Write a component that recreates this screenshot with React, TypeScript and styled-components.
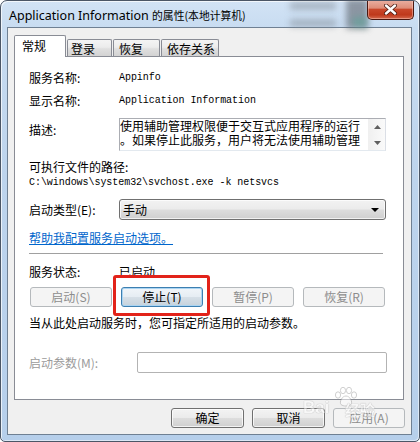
import React from "react";
import styled, { createGlobalStyle } from "styled-components";

const CJK = `"Noto Sans CJK SC", sans-serif`;
const MONO = `"Liberation Mono", "Noto Sans CJK SC", monospace`;

const Global = createGlobalStyle`
  html, body { margin: 0; padding: 0; background: #ffffff; }
  body { width: 420px; height: 442px; overflow: hidden; }
  #root { width: 420px; height: 442px; }
  * { box-sizing: border-box; }
`;

const Window = styled.div`
  position: relative;
  width: 420px;
  height: 442px;
  border: 1px solid #4b5666;
  border-radius: 7px 7px 5px 5px;
  background: linear-gradient(180deg, #d2e3f5 0%, #c8dcf1 6%, #bdd4ed 40%, #b6cfeb 100%);
  box-shadow: inset 1px 1px 0 rgba(255, 255, 255, 0.7), inset -1px -1px 0 rgba(255, 255, 255, 0.5);
  display: flex;
  flex-direction: column;
  padding: 0 7px 6px 6px;
  overflow: hidden;
  font-family: ${CJK};
`;

const TitleBar = styled.div`
  position: relative;
  height: 26px;
  flex: none;
  display: flex;
  align-items: center;
  padding-left: 2px;
`;

const Glass = styled.div<{ $l: number; $t: number; $w: number; $h: number; $c: string }>`
  position: absolute;
  left: ${(p) => p.$l}px;
  top: ${(p) => p.$t}px;
  width: ${(p) => p.$w}px;
  height: ${(p) => p.$h}px;
  background: ${(p) => p.$c};
  filter: blur(3px);
  pointer-events: none;
`;

const TitleText = styled.div`
  position: relative;
  font-family: "Noto Sans", ${CJK};
  font-size: 12.5px;
  line-height: 16px;
  color: #000;
  white-space: nowrap;
  margin-top: 2px;
`;

const TitleCjk = styled.span`
  font-family: ${CJK};
  font-size: 10.8px;
`;

const CloseButton = styled.div`
  position: relative;
  margin-left: auto;
  margin-right: -2px;
  align-self: flex-start;
  margin-top: -1px;
  width: 47px;
  height: 20px;
  border: 1px solid #4a1810;
  border-top: none;
  border-radius: 0 0 5px 5px;
  background: linear-gradient(180deg, #eab1a3 0%, #de8d78 42%, #c9472a 50%, #bf391c 78%, #d56a4e 100%);
  box-shadow: inset 0 0 0 1px rgba(255, 210, 200, 0.45);
  display: flex;
  align-items: center;
  justify-content: center;
`;

const Client = styled.div`
  flex: 1;
  display: flex;
  flex-direction: column;
  background: #f0f0f0;
  border: 1px solid #6f8093;
  padding: 7px 7px 6px 6px;
`;

const TabStrip = styled.div`
  display: flex;
  align-items: flex-end;
  height: 21px;
  flex: none;
`;

const Tab = styled.div<{ $active?: boolean; $w: number; $pl: number; $ml?: number }>`
  flex: none;
  position: relative;
  z-index: ${(p) => (p.$active ? 2 : 1)};
  width: ${(p) => p.$w}px;
  height: ${(p) => (p.$active ? 22 : 17)}px;
  margin-bottom: ${(p) => (p.$active ? -1 : 0)}px;
  margin-left: ${(p) => p.$ml ?? 0}px;
  padding: ${(p) => (p.$active ? 2 : 1)}px 0 0 ${(p) => p.$pl}px;
  border: 1px solid #898c95;
  border-bottom: none;
  border-radius: 2px 2px 0 0;
  background: ${(p) =>
    p.$active
      ? "#ffffff"
      : "linear-gradient(180deg, #f4f4f4 0%, #ececec 45%, #dfdfdf 55%, #d3d3d3 100%)"};
  font-size: 12px;
  line-height: 16px;
  color: #000;
  white-space: nowrap;
`;

const Panel = styled.div`
  flex: 1;
  background: #ffffff;
  border: 1px solid #898c95;
  display: flex;
  flex-direction: column;
  padding: 0 0 0 14px;
  font-size: 12px;
  color: #000;
`;

const Row = styled.div<{ $mt: number; $h?: number; $top?: boolean }>`
  display: flex;
  align-items: ${(p) => (p.$top ? "flex-start" : "center")};
  margin-top: ${(p) => p.$mt}px;
  height: ${(p) => p.$h ?? 16}px;
  line-height: 16px;
  white-space: nowrap;
`;

const Label = styled.div<{ $w?: number; $dim?: boolean; $mt?: number }>`
  flex: none;
  width: ${(p) => p.$w ?? 90}px;
  margin-top: ${(p) => p.$mt ?? 0}px;
  color: ${(p) => (p.$dim ? "#9b9b9b" : "#000")};
  font-size: 12px;
  line-height: 16px;
`;

const Mono = styled.span`
  font-family: ${MONO};
  font-size: 10px;
  letter-spacing: -0.05px;
`;

const DescBox = styled.div`
  flex: none;
  width: 267px;
  height: 33px;
  border: 1px solid #abadb3;
  border-right-color: #dbdfe6;
  border-bottom-color: #e3e9ef;
  background: #fff;
  display: flex;
  overflow: hidden;
`;

const DescText = styled.div`
  flex: 1;
  padding-left: 0;
  font-size: 12px;
  line-height: 13.5px;
  white-space: normal;
  overflow: hidden;
`;

const ScrollBar = styled.div`
  flex: none;
  width: 17px;
  background: linear-gradient(90deg, #f0f0f0, #fafafa);
  border-left: 1px solid #f0f0f0;
  display: flex;
  flex-direction: column;
  align-items: center;
  justify-content: space-between;
  padding: 6px 0 5px;
`;

const Combo = styled.div`
  flex: none;
  width: 267px;
  height: 21px;
  border: 1px solid #707070;
  border-radius: 3px;
  background: linear-gradient(180deg, #f2f2f2 0%, #ebebeb 48%, #dddddd 52%, #cfcfcf 100%);
  box-shadow: inset 0 0 0 1px rgba(255, 255, 255, 0.7);
  display: flex;
  align-items: center;
  padding: 0 3px 0 3px;
  font-size: 12px;
`;

const ComboArrow = styled.svg`
  margin-left: auto;
  margin-right: 3px;
`;

const Link = styled.a`
  color: #0066cc;
  text-decoration: underline;
  font-size: 12px;
  cursor: pointer;
`;

const Separator = styled.div`
  margin-top: 7px;
  width: 354px;
  height: 1px;
  background: #a0a0a0;
  flex: none;
`;

const ButtonRow = styled.div<{ $mt: number }>`
  display: flex;
  gap: 9px;
  margin-top: ${(p) => p.$mt}px;
  padding-left: 1px;
`;

type Variant = "normal" | "disabled" | "focused";

const Button = styled.div<{ $v?: Variant; $w: number }>`
  flex: none;
  width: ${(p) => p.$w}px;
  height: 20px;
  border-radius: 3px;
  border: 1px solid
    ${(p) => (p.$v === "disabled" ? "#b5b9bc" : p.$v === "focused" ? "#3c7fb1" : "#707070")};
  background: ${(p) =>
    p.$v === "disabled"
      ? "#f4f4f4"
      : p.$v === "focused"
      ? "linear-gradient(180deg, #f1f5f9 0%, #e6edf3 48%, #d6dfe7 52%, #c6d2dc 100%)"
      : "linear-gradient(180deg, #f3f3f3 0%, #ebebeb 48%, #dddddd 52%, #cfcfcf 100%)"};
  box-shadow: ${(p) =>
    p.$v === "disabled"
      ? "none"
      : p.$v === "focused"
      ? "inset 0 0 0 1px #aad4f2"
      : "inset 0 0 0 1px rgba(255,255,255,0.75)"};
  color: ${(p) => (p.$v === "disabled" ? "#8d8d8d" : "#000")};
  font-size: 12px;
  line-height: 16px;
  display: flex;
  align-items: center;
  justify-content: center;
  white-space: nowrap;
`;

const TextInput = styled.div`
  flex: none;
  width: 250px;
  height: 21px;
  border: 1px solid #b3b3b3;
  border-radius: 2px;
  background: #fff;
`;

const DialogButtons = styled.div`
  flex: none;
  display: flex;
  justify-content: flex-end;
  gap: 8px;
  margin-top: 8px;
  margin-right: -1px;
`;

const Highlight = styled.div`
  position: absolute;
  left: 112px;
  top: 274px;
  width: 97px;
  height: 41px;
  border: 3px solid #e2231a;
  border-radius: 3px;
  pointer-events: none;
`;

const Watermark = styled.div`
  position: absolute;
  left: 300px;
  top: 384px;
  width: 100px;
  height: 50px;
  opacity: 0.5;
  pointer-events: none;
  color: #ffffff;
  text-shadow: 0 0 1px #8a8a8a, 0 0 1px #8a8a8a;
`;

const WmBai = styled.div`
  position: absolute;
  left: 2px;
  top: 14px;
  font-family: "Liberation Sans", sans-serif;
  font-weight: bold;
  font-size: 17px;
  line-height: 18px;
`;

const WmJing = styled.div`
  position: absolute;
  left: 44px;
  top: 16px;
  font-family: ${CJK};
  font-weight: bold;
  font-size: 15px;
  line-height: 18px;
`;

const WmPaw = styled.svg`
  position: absolute;
  left: 32px;
  top: 2px;
`;

export default function App() {
  return (
    <>
      <Global />
      <Window>
        <TitleBar>
          <Glass $l={283} $t={1} $w={46} $h={8} $c="rgba(120,128,138,0.45)" />
          <Glass $l={283} $t={18} $w={46} $h={8} $c="rgba(120,128,138,0.45)" />
          <Glass $l={339} $t={-2} $w={22} $h={30} $c="rgba(95,100,108,0.6)" />
          <Glass $l={346} $t={16} $w={14} $h={10} $c="rgba(80,170,150,0.45)" />
          <TitleText>
            Application Information <TitleCjk>的属性(本地计算机)</TitleCjk>
          </TitleText>
          <CloseButton aria-label="关闭">
            <svg width="13" height="11" viewBox="0 0 13 11">
              <path d="M2 1.5 L11 9.5 M11 1.5 L2 9.5" stroke="#4a1a10" strokeWidth="4" strokeLinecap="round" />
              <path d="M2 1.5 L11 9.5 M11 1.5 L2 9.5" stroke="#ffffff" strokeWidth="2.4" strokeLinecap="round" />
            </svg>
          </CloseButton>
        </TitleBar>
        <Client>
          <TabStrip>
            <Tab $active $w={52} $pl={7}>常规</Tab>
            <Tab $w={45} $pl={3} $ml={1}>登录</Tab>
            <Tab $w={47} $pl={5} $ml={1}>恢复</Tab>
            <Tab $w={58} $pl={5} $ml={1}>依存关系</Tab>
          </TabStrip>
          <Panel>
            <Row $mt={13}>
              <Label>服务名称:</Label>
              <Mono>Appinfo</Mono>
            </Row>
            <Row $mt={7}>
              <Label>显示名称:</Label>
              <Mono>Application Information</Mono>
            </Row>
            <Row $mt={9} $h={33} $top>
              <Label $mt={4}>描述:</Label>
              <DescBox>
                <DescText>
                  使用辅助管理权限便于交互式应用程序的运行
                  <br />
                  。如果停止此服务，用户将无法使用辅助管理
                </DescText>
                <ScrollBar>
                  <svg width="7" height="4" viewBox="0 0 7 4">
                    <path d="M0 4 L3.5 0 L7 4 Z" fill="#5f5f5f" />
                  </svg>
                  <svg width="7" height="4" viewBox="0 0 7 4">
                    <path d="M0 0 L3.5 4 L7 0 Z" fill="#5f5f5f" />
                  </svg>
                </ScrollBar>
              </DescBox>
            </Row>
            <Row $mt={8}>可执行文件的路径:</Row>
            <Row $mt={0}>
              <Mono>C:\windows\system32\svchost.exe -k netsvcs</Mono>
            </Row>
            <Row $mt={8} $h={21}>
              <Label>启动类型(E):</Label>
              <Combo>
                手动
                <ComboArrow width="8" height="4" viewBox="0 0 8 4">
                  <path d="M0 0 L8 0 L4 4 Z" fill="#000" />
                </ComboArrow>
              </Combo>
            </Row>
            <Row $mt={10}>
              <Link>帮助我配置服务启动选项。</Link>
            </Row>
            <Separator />
            <Row $mt={10}>
              <Label>服务状态:</Label>
              已启动
            </Row>
            <ButtonRow $mt={7}>
              <Button $v="disabled" $w={82}>启动(S)</Button>
              <Button $v="focused" $w={82}>停止(T)</Button>
              <Button $v="disabled" $w={82}>暂停(P)</Button>
              <Button $v="disabled" $w={82}>恢复(R)</Button>
            </ButtonRow>
            <Row $mt={8}>当从此处启动服务时，您可指定所适用的启动参数。</Row>
            <Row $mt={21} $h={21}>
              <Label $w={108} $dim>启动参数(M):</Label>
              <TextInput />
            </Row>
          </Panel>
          <DialogButtons>
            <Button $w={73}>确定</Button>
            <Button $w={73}>取消</Button>
            <Button $v="disabled" $w={72}>应用(A)</Button>
          </DialogButtons>
        </Client>
        <Highlight />
        <Watermark>
          <WmPaw width="26" height="20" viewBox="0 0 26 20">
            <g fill="#ffffff" stroke="#8a8a8a" strokeWidth="0.8">
              <ellipse cx="5" cy="8" rx="2.6" ry="3.2" />
              <ellipse cx="10" cy="3.5" rx="2.6" ry="3.2" />
              <ellipse cx="16" cy="3.5" rx="2.6" ry="3.2" />
              <ellipse cx="21" cy="8" rx="2.6" ry="3.2" />
              <path d="M13 9 C9 9 6 15 8 17.5 C10 19.5 16 19.5 18 17.5 C20 15 17 9 13 9 Z" />
            </g>
          </WmPaw>
          <WmBai>Bai</WmBai>
          <WmJing>经验</WmJing>
        </Watermark>
      </Window>
    </>
  );
}
